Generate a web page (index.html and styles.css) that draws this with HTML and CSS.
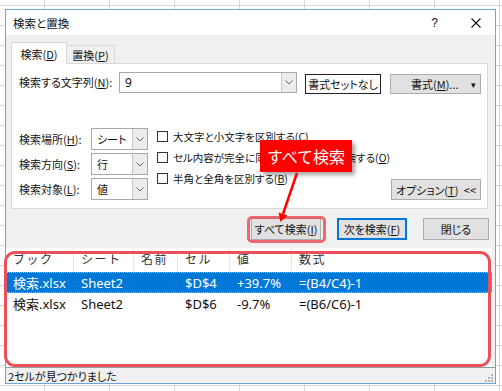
FILE: index.html
```html
<!DOCTYPE html>
<html lang="ja">
<head>
    <meta charset="UTF-8">
    <title>検索と置換</title>
    <link rel="stylesheet" href="styles.css">
</head>
<body>
    <div class="dialog">
        <div class="titlebar">
            <span class="title">検索と置換</span>
            <span class="help">?</span>
            <svg class="close" width="10" height="10" viewBox="0 0 10 10">
                <path d="M0.5 0.5 L9.5 9.5 M9.5 0.5 L0.5 9.5" stroke="#111" stroke-width="1.1" fill="none"/>
            </svg>
        </div>
        <div class="client">
            <div class="tabs">
                <div class="tab active">検索(<u>D</u>)</div>
                <div class="tab">置換(<u>P</u>)</div>
            </div>
            <div class="panel">
                <div class="find-row">
                    <span class="find-label">検索する文字列(<u>N</u>):</span>
                    <div class="combo combo-wide">
                        <span class="combo-text">9</span>
                        <span class="combo-btn"><svg width="8" height="5" viewBox="0 0 8 5"><path d="M0.5 0.5 L4 4 L7.5 0.5" stroke="#666" fill="none"/></svg></span>
                    </div>
                    <button class="btn btn-plain">書式セットなし</button>
                    <button class="btn btn-format"><span>書式(<u>M</u>)...</span><span class="caret">▾</span></button>
                </div>
                <div class="opts">
                    <div class="opt-grid">
                        <span class="opt-label">検索場所(<u>H</u>):</span>
                        <div class="combo"><span class="combo-text">シート</span><span class="combo-btn"><svg width="8" height="5" viewBox="0 0 8 5"><path d="M0.5 0.5 L4 4 L7.5 0.5" stroke="#666" fill="none"/></svg></span></div>
                        <span class="opt-label">検索方向(<u>S</u>):</span>
                        <div class="combo"><span class="combo-text">行</span><span class="combo-btn"><svg width="8" height="5" viewBox="0 0 8 5"><path d="M0.5 0.5 L4 4 L7.5 0.5" stroke="#666" fill="none"/></svg></span></div>
                        <span class="opt-label">検索対象(<u>L</u>):</span>
                        <div class="combo"><span class="combo-text">値</span><span class="combo-btn"><svg width="8" height="5" viewBox="0 0 8 5"><path d="M0.5 0.5 L4 4 L7.5 0.5" stroke="#666" fill="none"/></svg></span></div>
                    </div>
                    <div class="checks">
                        <div class="check"><span class="box"></span>大文字と小文字を区別する(<u>C</u>)</div>
                        <div class="check"><span class="box"></span>セル内容が完全に同一であるものを検索する(<u>O</u>)</div>
                        <div class="check"><span class="box"></span>半角と全角を区別する(<u>B</u>)</div>
                    </div>
                    <button class="btn btn-options">オプション(<u>T</u>) &lt;&lt;</button>
                </div>
            </div>
            <div class="actions">
                <button class="btn btn-act">すべて検索(<u>I</u>)</button>
                <button class="btn btn-act btn-default">次を検索(<u>F</u>)</button>
                <button class="btn btn-act btn-close">閉じる</button>
            </div>
            <div class="results">
                <div class="row head">
                    <span class="c1">ブック</span><span class="c2">シート</span><span class="c3">名前</span><span class="c4">セル</span><span class="c5">値</span><span class="c6">数式</span>
                </div>
                <div class="row selected">
                    <span class="c1">検索.xlsx</span><span class="c2">Sheet2</span><span class="c3"></span><span class="c4">$D$4</span><span class="c5">+39.7%</span><span class="c6">=(B4/C4)-1</span>
                </div>
                <div class="row">
                    <span class="c1">検索.xlsx</span><span class="c2">Sheet2</span><span class="c3"></span><span class="c4">$D$6</span><span class="c5">-9.7%</span><span class="c6">=(B6/C6)-1</span>
                </div>
            </div>
        </div>
        <div class="status">
            <span>2セルが見つかりました</span>
            <svg class="grip" width="9" height="9" viewBox="0 0 9 9" fill="#b4b4b4">
                <rect x="7" y="1" width="2" height="2"/><rect x="4" y="4" width="2" height="2"/><rect x="7" y="4" width="2" height="2"/>
                <rect x="1" y="7" width="2" height="2"/><rect x="4" y="7" width="2" height="2"/><rect x="7" y="7" width="2" height="2"/>
            </svg>
        </div>
    </div>

    <!-- 注釈 -->
    <div class="mark list-mark"></div>
    <div class="mark btn-mark"></div>
    <div class="callout">すべて検索</div>
    <svg class="arrow" width="40" height="56" viewBox="0 0 40 56">
        <line x1="27" y1="3" x2="13" y2="44" stroke="#f00" stroke-width="2.5"/>
        <polygon points="10.5,52 17.5,45.5 8.5,42.5" fill="#f00"/>
    </svg>
</body>
</html>
```

FILE: styles.css
```css
* {
    box-sizing: border-box;
}
html, body {
    margin: 0;
    padding: 0;
}
body {
    width: 502px;
    height: 391px;
    overflow: hidden;
    font-family: "Noto Sans CJK JP", "Noto Sans", sans-serif;
    font-feature-settings: "palt";
    font-size: 11px;
    color: #111;
    white-space: nowrap;
    background-color: #fff;
    background-image:
        linear-gradient(to right, #d6d6d6 1px, transparent 1px),
        linear-gradient(to bottom, #d6d6d6 1px, transparent 1px);
    background-size: 65px 20px;
    background-position: 44px 5px;
}
u {
    text-decoration: underline;
    text-underline-offset: 1px;
}
.dialog {
    margin: 9px 0 0 5px;
    width: 491px;
    height: 375px;
    border: 1px solid #6ea4dc;
    background-color: #f0f0f0;
    display: flex;
    flex-direction: column;
}
.titlebar {
    height: 26px;
    background-color: #fff;
    display: flex;
    align-items: center;
    padding-left: 7px;
}
.title {
    font-size: 11.5px;
}
.help {
    margin-left: auto;
    font-family: "Liberation Sans", sans-serif;
    font-size: 12px;
    margin-right: 33px;
}
.close {
    margin-right: 14px;
}
.client {
    flex: 1;
    padding-top: 7px;
}
.tabs {
    display: flex;
    align-items: flex-end;
    height: 21px;
    padding-left: 5px;
}
.tab {
    height: 18px;
    width: 48px;
    border: 1px solid #d9d9d9;
    border-left: none;
    border-bottom: none;
    background-color: #f0f0f0;
    display: flex;
    align-items: center;
    justify-content: center;
}
.tab.active {
    height: 22px;
    width: 56px;
    margin-bottom: -1px;
    border-left: 1px solid #d9d9d9;
    background-color: #fff;
    position: relative;
    z-index: 1;
}
.panel {
    margin-left: 5px;
    width: 477px;
    height: 146px;
    background-color: #fff;
    border: 1px solid #d9d9d9;
    padding: 8px 6px 0 7px;
}
.find-row {
    display: flex;
    align-items: flex-start;
    height: 21px;
}
.find-label {
    width: 100px;
    line-height: 21px;
}
.combo {
    display: flex;
    height: 22px;
    border: 1px solid #a9a9a9;
    background-color: #fff;
}
.combo-text {
    flex: 1;
    padding-left: 5px;
    line-height: 20px;
    overflow: hidden;
}
.combo-wide {
    width: 178px;
    height: 21px;
}
.combo-wide .combo-text {
    font-family: "Noto Sans", sans-serif;
    font-size: 12px;
    line-height: 19px;
}
.combo-btn {
    width: 15px;
    flex-shrink: 0;
    border-left: 1px solid #c8c8c8;
    background-color: #ececec;
    display: flex;
    align-items: center;
    justify-content: center;
}
.btn {
    font-family: "Noto Sans CJK JP", "Noto Sans", sans-serif;
    font-feature-settings: "palt";
    font-size: 11px;
    color: #111;
    white-space: nowrap;
    background-color: #e1e1e1;
    border: 1px solid #adadad;
    padding: 0;
    height: 21px;
    display: flex;
    align-items: center;
    justify-content: center;
    flex-shrink: 0;
}
.btn-plain {
    margin: 2px 0 0 8px;
    width: 76px;
    height: 20px;
    background-color: #fff;
    border: 1px solid #222;
}
.btn-format {
    margin: 2px 0 0 9px;
    width: 91px;
    height: 20px;
    justify-content: space-between;
    padding: 0 4px 0 20px;
}
.caret {
    font-size: 9px;
}
.opts {
    display: flex;
    margin-top: 35px;
}
.opt-grid {
    display: grid;
    grid-template-columns: 72px 57px;
    grid-auto-rows: 22px;
    row-gap: 3px;
    flex-shrink: 0;
}
.opt-label {
    line-height: 22px;
}
.checks {
    margin: -2px 0 0 9px;
    flex-shrink: 0;
    font-size: 10.5px;
}
.check {
    height: 21px;
    display: flex;
    align-items: center;
}
.box {
    width: 11px;
    height: 11px;
    border: 1px solid #333;
    background-color: #fff;
    margin-right: 5px;
    flex-shrink: 0;
}
.btn-options {
    margin-left: auto;
    align-self: flex-end;
    width: 90px;
    word-spacing: 3px;
}
.actions {
    display: flex;
    justify-content: flex-end;
    gap: 16px;
    margin-top: 9px;
    padding-right: 6px;
}
.btn-act {
    width: 70px;
    height: 22px;
}
.btn-close {
    width: 66px;
}
.btn-default {
    border: 1px solid #0078d7;
    box-shadow: inset 0 0 0 1px #0078d7;
}
.results {
    margin-top: 8px;
    width: 486px;
    height: 119px;
    background-color: #fff;
    font-family: "Noto Sans", "Noto Sans CJK JP", sans-serif;
    font-feature-settings: normal;
    font-size: 13px;
}
.row {
    display: flex;
    height: 21px;
    align-items: center;
}
.row span {
    padding-left: 7px;
    overflow: hidden;
}
.row.head {
    height: 24px;
    font-family: "Noto Sans CJK JP", sans-serif;
    font-size: 12px;
    letter-spacing: 1.5px;
    color: #333;
}
.row.head span {
    height: 24px;
    line-height: 22px;
    border-right: 1px solid #e5e5e5;
}
.row.selected {
    background-color: #0078d7;
    color: #fff;
    outline: 1px dotted #f0b060;
    outline-offset: -1px;
}
.c1 { width: 68px; }
.c2 { width: 60px; }
.c3 { width: 44px; }
.c4 { width: 52px; }
.c5 { width: 62px; }
.c6 { flex: 1; }
.row.head .c6 {
    border-right: none;
}
.status {
    height: 16px;
    border-top: 1px solid #9a9a9a;
    display: flex;
    align-items: center;
    justify-content: space-between;
    padding: 0 2px;
    font-size: 11px;
}
.grip {
    align-self: flex-end;
    margin-bottom: 1px;
}
.mark {
    position: absolute;
    border: 3px solid #ea4f5a;
}
.list-mark {
    left: 4px;
    top: 251px;
    width: 487px;
    height: 116px;
    border-radius: 11px;
}
.btn-mark {
    left: 247px;
    top: 216px;
    width: 79px;
    height: 27px;
    border-radius: 5px;
    border-color: rgba(234, 79, 90, 0.85);
}
.callout {
    position: absolute;
    left: 260px;
    top: 140px;
    width: 92px;
    height: 32px;
    background-color: #f00;
    color: #fff;
    font-size: 16px;
    font-feature-settings: normal;
    display: flex;
    align-items: center;
    justify-content: center;
    box-shadow: 3px 3px 4px rgba(0, 0, 0, 0.35);
}
.arrow {
    position: absolute;
    left: 270px;
    top: 170px;
}
```
